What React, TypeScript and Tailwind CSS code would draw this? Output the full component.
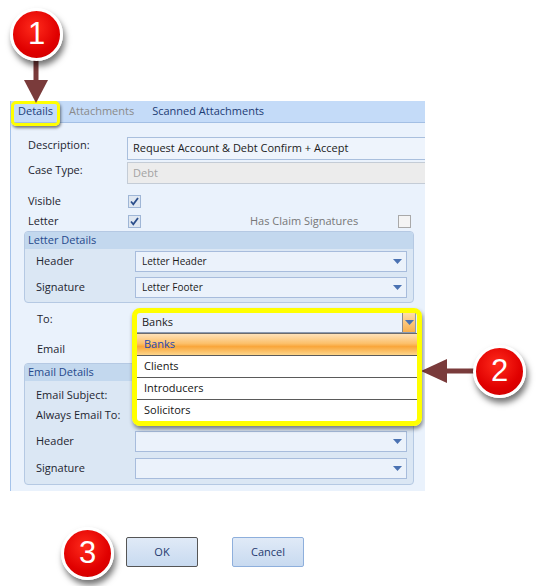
import React from "react";

// small blue drop arrow used by the combo boxes
function Caret() {
  return (
    <svg width="9" height="5" viewBox="0 0 9 5">
      <path d="M0 0h9L4.5 5z" fill="#4a72b2" />
    </svg>
  );
}

function Check({ on }: { on?: boolean }) {
  return (
    <div
      className={
        on
          ? "w-[13px] h-[13px] border border-[#9fb6d6] bg-[#dfe7f1] flex items-center justify-center"
          : "w-[13px] h-[13px] border border-[#a9a9a9] bg-[#f4f4f4]"
      }
    >
      {on && (
        <svg width="9" height="9" viewBox="0 0 9 9">
          <path d="M1 4.5l2.3 2.8L8 1" stroke="#2c4f8c" strokeWidth="1.8" fill="none" />
        </svg>
      )}
    </div>
  );
}

function Combo({ value, width = "w-[272px]" }: { value?: string; width?: string }) {
  return (
    <div
      className={`${width} h-[21px] border border-[#a7bcdc] bg-[#ebf2fb] flex items-center justify-between pl-[6px] pr-[4px] text-[10px] text-[#1b1b1b]`}
    >
      <span>{value}</span>
      <Caret />
    </div>
  );
}

function Row({ label, children }: { label: string; children?: React.ReactNode }) {
  return (
    <div className="flex items-center">
      <div className="w-[99px] text-[#1d2530]">{label}</div>
      {children}
    </div>
  );
}

function Badge({ n, className }: { n: string; className: string }) {
  return (
    <div
      className={`absolute w-[53px] h-[53px] rounded-full border-[3px] border-white bg-[radial-gradient(circle_at_45%_35%,#ff2b1c,#e00000_60%,#c80000)] shadow-[2px_5px_6px_rgba(0,0,0,0.55)] flex items-center justify-center text-white text-[31px] font-['Liberation_Sans',sans-serif] ${className}`}
    >
      {n}
    </div>
  );
}

function GroupBox({
  title,
  children,
  className = "",
}: {
  title: string;
  children: React.ReactNode;
  className?: string;
}) {
  return (
    <div
      className={`ml-[13px] w-[390px] border border-[#b5c9e3] rounded-[4px] bg-[#dbe7f4] overflow-hidden ${className}`}
    >
      <div className="h-[17px] bg-[#c3d8ee] pl-[3px] flex items-center text-[#26498c]">{title}</div>
      {children}
    </div>
  );
}

const options = ["Banks", "Clients", "Introducers", "Solicitors"];

export default function App() {
  return (
    <div className="relative w-[536px] h-[586px] bg-white overflow-hidden font-['Open_Sans',sans-serif] text-[11px]">
      {/* case editor window */}
      <div className="absolute left-[10px] top-[101px] w-[415px] h-[390px] overflow-hidden border-l border-[#a5c3ea] bg-[#eaf2fc]">
        <div className="relative h-[22px] bg-[#c4dbf8] border-b border-[#a3bfe4] flex items-center">
          <span className="ml-[7px] text-[#22407a]">Details</span>
          <span className="ml-[16px] text-[#8a8a8a]">Attachments</span>
          <span className="ml-[18px] text-[#1d3c74]">Scanned Attachments</span>
          <div className="absolute left-0 top-0 w-[49px] h-[25px] rounded-[5px] border-[3px] border-[#ffff00] shadow-[1px_2px_3px_rgba(0,0,0,0.5)]" />
        </div>

        <div className="pl-[17px] pt-[14px] flex flex-col">
          <div className="flex items-start h-[23px]">
            <div className="w-[99px] shrink-0 text-[#1d2530] leading-[15px]">Description:</div>
            <div className="w-[320px] shrink-0 h-[23px] border border-[#a9bfdd] bg-[#eef4fc] flex items-center pl-[5px] text-[#1b1b1b]">
              Request Account &amp; Debt Confirm + Accept
            </div>
          </div>
          <div className="flex items-start h-[22px] mt-[2px]">
            <div className="w-[99px] shrink-0 text-[#1d2530] leading-[15px]">Case Type:</div>
            <div className="w-[320px] shrink-0 h-[22px] border border-[#c4ccd6] bg-[#ececec] flex items-center pl-[5px] text-[#a3a3a3]">
              Debt
            </div>
          </div>
          <div className="flex items-center h-[20px] mt-[7px]">
            <div className="w-[100px] text-[#1d2530]">Visible</div>
            <Check on />
          </div>
          <div className="flex items-center h-[20px]">
            <div className="w-[100px] text-[#1d2530]">Letter</div>
            <Check on />
            <div className="ml-[109px] w-[148px] text-[#777]">Has Claim Signatures</div>
            <Check />
          </div>
        </div>

        <GroupBox title="Letter Details">
          <div className="pl-[11px] pt-[2px] pb-[4px] flex flex-col gap-[5px]">
            <Row label="Header">
              <Combo value="Letter Header" />
            </Row>
            <Row label="Signature">
              <Combo value="Letter Footer" />
            </Row>
          </div>
        </GroupBox>

        <div className="pl-[26px] mt-[8px] flex items-start">
          <div className="w-[99px] leading-[15px] text-[#1d2530]">To:</div>
          <div className="relative">
            <div className="w-[280px] h-[22px] border border-[#8a9bb3] bg-[#ebf2fb] flex items-center justify-between pl-[5px] text-[#1b1b1b]">
              <span>Banks</span>
              <div className="w-[13px] h-full border-l border-[#8a8a8a] bg-[linear-gradient(#fde0b0,#f9b04c)] flex items-center justify-center">
                <Caret />
              </div>
            </div>
            <div className="absolute left-[1px] top-[22px] w-[280px] z-10 bg-white">
              {options.map((o, i) => (
                <div
                  key={o}
                  className={
                    i === 0
                      ? "h-[22px] pl-[7px] flex items-center border-t border-[#6b6b6b] bg-[linear-gradient(#fde1b8,#fcc06a_45%,#f9a63a_60%,#fdd58a)] text-[#2447b2]"
                      : "h-[22px] pl-[7px] flex items-center border-t border-[#5a5a5a] text-[#151515]"
                  }
                >
                  {o}
                </div>
              ))}
            </div>
            <div className="absolute -left-[4px] -top-[3px] w-[290px] h-[118px] z-20 rounded-[8px] border-[5px] border-[#ffff00] shadow-[1px_3px_4px_rgba(0,0,0,0.45)]" />
          </div>
        </div>

        <div className="pl-[26px] mt-[8px] leading-[15px] text-[#1d2530]">Email</div>

        <GroupBox title="Email Details" className="mt-[7px]">
          <div className="pl-[11px] pt-[4px] pb-[5px] flex flex-col">
            <div className="h-[20px] flex items-center">
              <Row label="Email Subject:">
                <div className="w-[272px] h-[19px] border border-[#a7bcdc] bg-[#ebf2fb]" />
              </Row>
            </div>
            <div className="h-[20px] flex items-center">
              <Row label="Always Email To:">
                <div className="w-[272px] h-[19px] border border-[#a7bcdc] bg-[#ebf2fb]" />
              </Row>
            </div>
            <div className="mt-[6px] flex flex-col gap-[6px]">
              <Row label="Header">
                <Combo />
              </Row>
              <Row label="Signature">
                <Combo />
              </Row>
            </div>
          </div>
        </GroupBox>
      </div>

      {/* dialog buttons */}
      <div className="absolute left-[126px] top-[537px] flex gap-[34px]">
        <button className="w-[72px] h-[30px] border border-[#555] rounded-[2px] bg-[linear-gradient(#e0eaf7,#c8daf0)] text-[#1f3a6e]">
          OK
        </button>
        <button className="w-[72px] h-[30px] border border-[#8eafdc] rounded-[2px] bg-[linear-gradient(#e0eaf7,#c8daf0)] text-[#1f3a6e]">
          Cancel
        </button>
      </div>

      {/* callout arrows */}
      <svg className="absolute left-0 top-0 pointer-events-none" width="536" height="586">
        <g fill="#7a3b3b">
          <rect x="33.5" y="58" width="5" height="24" />
          <polygon points="24,80 48,80 36,103" />
          <rect x="445" y="368.5" width="30" height="5" />
          <polygon points="447,359 447,383 421,371" />
        </g>
      </svg>

      <Badge n="1" className="left-[10px] top-[8px]" />
      <Badge n="2" className="left-[473px] top-[345px]" />
      <Badge n="3" className="left-[61px] top-[527px]" />
    </div>
  );
}
